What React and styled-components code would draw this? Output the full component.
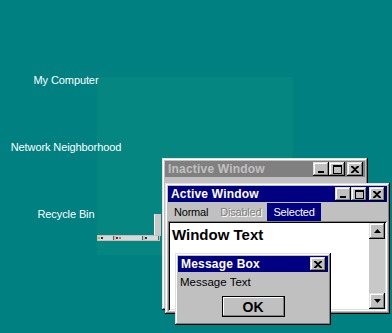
import React from 'react';
import styled, { createGlobalStyle } from 'styled-components';

const GlobalStyle = createGlobalStyle`
    html, body {
        margin: 0;
        padding: 0;
        background: #008080;
    }
    body {
        font-family: "Liberation Sans", Arial, sans-serif;
    }
`;

const raised = `
    box-shadow: inset -1px -1px #000, inset 1px 1px #dfdfdf,
        inset -2px -2px #808080, inset 2px 2px #fff;
`;

const Desktop = styled.div`
    position: relative;
    width: 392px;
    height: 333px;
    overflow: hidden;
    background: #008080;
`;

const IconColumn = styled.div`
    display: flex;
    flex-direction: column;
    align-items: center;
    gap: 54px;
    width: 132px;
    padding-top: 74px;
    position: relative;
    z-index: 1;
`;

const IconLabel = styled.div`
    color: #fff;
    font-size: 11px;
    line-height: 13px;
    letter-spacing: -0.1px;
    white-space: nowrap;
`;

const Wallpaper = styled.div`
    position: absolute;
    left: 97px;
    top: 77px;
    width: 196px;
    height: 178px;
    background: #068680;
`;

const MiniTaskbar = styled.div`
    position: absolute;
    left: 0;
    top: 158px;
    width: 63px;
    height: 6px;
    background: #c0c0c0;
    display: flex;
    align-items: center;
    gap: 2px;
    padding: 0 1px;
    box-sizing: border-box;
`;

const MiniItem = styled.div`
    height: 4px;
    width: ${p => p.w}px;
    background: #d8d8d8;
    border-right: 1px solid #606060;
    display: flex;
    align-items: center;
    gap: 1px;
`;

const MiniDot = styled.span`
    width: 2px;
    height: 2px;
    background: ${p => p.c};
`;

const MiniScroll = styled.div`
    position: absolute;
    left: 57px;
    top: 137px;
    width: 6px;
    height: 22px;
    background: #c8c8c8;
    border-left: 1px solid #fff;
`;

const Window = styled.div`
    position: absolute;
    left: ${p => p.x}px;
    top: ${p => p.y}px;
    width: ${p => p.w}px;
    height: ${p => p.h}px;
    box-sizing: border-box;
    background: #c0c0c0;
    padding: 3px;
    display: flex;
    flex-direction: column;
    ${raised}
    z-index: ${p => p.z};
`;

const TitleBar = styled.div`
    height: 16px;
    flex: none;
    display: flex;
    align-items: center;
    padding: 0 2px 0 3px;
    background: ${p => (p.inactive ? '#808080' : '#000080')};
    color: ${p => (p.inactive ? '#c0c0c0' : '#fff')};
    font-weight: bold;
    font-size: 12px;
    letter-spacing: 0.2px;
`;

const Title = styled.span`
    flex: 1;
    white-space: nowrap;
`;

const TitleButtons = styled.div`
    display: flex;
    align-items: center;
`;

const TitleButton = styled.div`
    width: 16px;
    height: 14px;
    box-sizing: border-box;
    background: #c0c0c0;
    display: flex;
    align-items: center;
    justify-content: center;
    margin-left: ${p => (p.gap ? 2 : 0)}px;
    ${raised}
`;

const MinIcon = () => (
    <svg width="8" height="8" viewBox="0 0 8 8">
        <rect x="1" y="6" width="6" height="2" fill="#000" />
    </svg>
);

const MaxIcon = () => (
    <svg width="9" height="9" viewBox="0 0 9 9">
        <rect x="0.5" y="0.5" width="8" height="8" fill="none" stroke="#000" />
        <rect x="0" y="0" width="9" height="2" fill="#000" />
    </svg>
);

const CloseIcon = () => (
    <svg width="8" height="7" viewBox="0 0 8 7">
        <path d="M0 0h2l2 2 2-2h2v1L5 3.5 8 6v1H6L4 5 2 7H0V6l3-2.5L0 1z" fill="#000" />
    </svg>
);

const Controls = ({ full }) => (
    <TitleButtons>
        {full && (
            <>
                <TitleButton><MinIcon /></TitleButton>
                <TitleButton><MaxIcon /></TitleButton>
            </>
        )}
        <TitleButton gap={full}><CloseIcon /></TitleButton>
    </TitleButtons>
);

const MenuBar = styled.div`
    height: 18px;
    flex: none;
    display: flex;
    align-items: stretch;
    font-size: 11px;
    padding-top: 1px;
`;

const MenuItem = styled.div`
    display: flex;
    align-items: center;
    padding: 0 6px;
    letter-spacing: -0.2px;
    color: ${p => (p.disabled ? '#808080' : p.selected ? '#fff' : '#000')};
    background: ${p => (p.selected ? '#000080' : 'transparent')};
    text-shadow: ${p => (p.disabled ? '1px 1px #fff' : 'none')};
`;

const Client = styled.div`
    flex: 1;
    display: flex;
    background: #fff;
    box-shadow: inset 1px 1px #808080, inset -1px -1px #fff,
        inset 2px 2px #000, inset -2px -2px #dfdfdf;
    padding: 2px;
`;

const WindowText = styled.div`
    flex: 1;
    font-weight: bold;
    font-size: 15px;
    padding: 3px 0 0 2px;
`;

const ScrollBar = styled.div`
    width: 16px;
    display: flex;
    flex-direction: column;
    justify-content: space-between;
    background: #c8c8c8;
`;

const ScrollButton = styled.div`
    width: 16px;
    height: 16px;
    box-sizing: border-box;
    display: flex;
    align-items: center;
    justify-content: center;
    background: #c0c0c0;
    ${raised}
`;

const Arrow = ({ down }) => (
    <svg width="7" height="4" viewBox="0 0 7 4">
        <path d={down ? 'M0 0h7L3.5 4z' : 'M3.5 0L7 4H0z'} fill="#000" />
    </svg>
);

const MessageBody = styled.div`
    flex: 1;
    display: flex;
    flex-direction: column;
    align-items: center;
    font-size: 11.5px;
`;

const MessageText = styled.div`
    align-self: flex-start;
    padding: 4px 0 0 2px;
`;

const OkButton = styled.div`
    width: 63px;
    height: 21px;
    box-sizing: border-box;
    margin-top: 8px;
    display: flex;
    align-items: center;
    justify-content: center;
    font-weight: bold;
    font-size: 14px;
    background: #c0c0c0;
    box-shadow: inset -1px -1px #000, inset 1px 1px #000,
        inset -2px -2px #808080, inset 2px 2px #fff;
`;

export default function App() {
    return (
        <Desktop>
            <GlobalStyle />
            <Wallpaper>
                <MiniScroll />
                <MiniTaskbar>
                    <MiniItem w={16}><MiniDot c="#d0b000" /><MiniDot c="#333" /></MiniItem>
                    <MiniItem w={26}><MiniDot c="#c00" /><MiniDot c="#888" /></MiniItem>
                    <MiniItem w={14}><MiniDot c="#333" /></MiniItem>
                </MiniTaskbar>
            </Wallpaper>
            <IconColumn>
                <IconLabel>My Computer</IconLabel>
                <IconLabel>Network Neighborhood</IconLabel>
                <IconLabel>Recycle Bin</IconLabel>
            </IconColumn>

            <Window x={162} y={158} w={206} h={152} z={2}>
                <TitleBar inactive>
                    <Title>Inactive Window</Title>
                    <Controls full />
                </TitleBar>
            </Window>

            <Window x={165} y={183} w={225} h={131} z={3}>
                <TitleBar>
                    <Title>Active Window</Title>
                    <Controls full />
                </TitleBar>
                <MenuBar>
                    <MenuItem>Normal</MenuItem>
                    <MenuItem disabled>Disabled</MenuItem>
                    <MenuItem selected>Selected</MenuItem>
                </MenuBar>
                <Client>
                    <WindowText>Window Text</WindowText>
                    <ScrollBar>
                        <ScrollButton><Arrow /></ScrollButton>
                        <ScrollButton><Arrow down /></ScrollButton>
                    </ScrollBar>
                </Client>
            </Window>

            <Window x={175} y={253} w={156} h={72} z={4}>
                <TitleBar>
                    <Title>Message Box</Title>
                    <Controls />
                </TitleBar>
                <MessageBody>
                    <MessageText>Message Text</MessageText>
                    <OkButton>OK</OkButton>
                </MessageBody>
            </Window>
        </Desktop>
    );
}
